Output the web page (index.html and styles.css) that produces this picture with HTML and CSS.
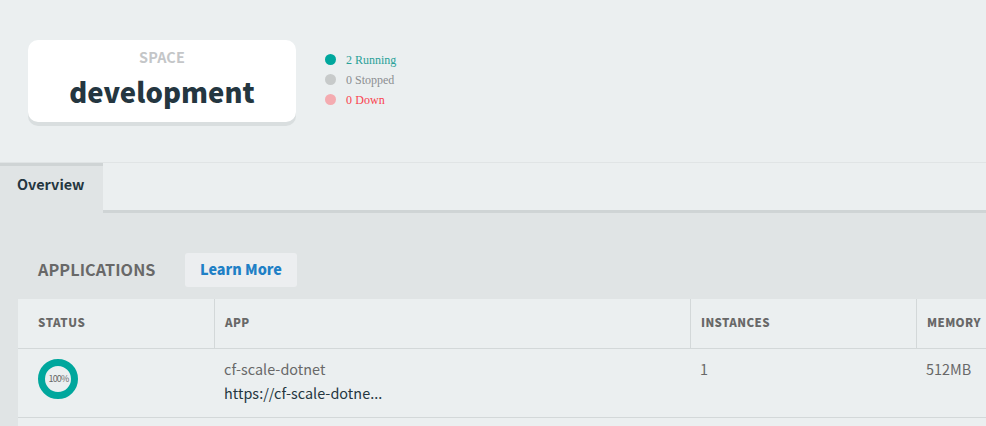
FILE: index.html
```html
<!DOCTYPE html>
<html lang="en">
<head>
<meta charset="utf-8">
<title>Space: development</title>
<link rel="stylesheet" href="styles.css">
</head>
<body>
<header class="space-header">
  <div class="space-card">
    <span class="space-label">SPACE</span>
    <h1 class="space-name">development</h1>
  </div>
  <ul class="health">
    <li class="running"><i class="dot"></i><span>2 Running</span></li>
    <li class="stopped"><i class="dot"></i><span>0 Stopped</span></li>
    <li class="down"><i class="dot"></i><span>0 Down</span></li>
  </ul>
</header>
<nav class="tabs">
  <a class="tab"><span class="tab-text">Overview</span></a>
  <div class="tabs-rest"></div>
</nav>
<main class="content">
  <div class="section-head">
    <h2 class="section-title"><span>APPLICATIONS</span></h2>
    <a class="learn"><span>Learn More</span></a>
  </div>
  <div class="table">
    <div class="row head">
      <div class="cell"><span class="h-status">STATUS</span></div>
      <div class="cell"><span class="h-app">APP</span></div>
      <div class="cell"><span class="h-inst">INSTANCES</span></div>
      <div class="cell"><span class="h-mem">MEMORY</span></div>
    </div>
    <div class="row app">
      <div class="cell"><div class="ring"><span>100%</span></div></div>
      <div class="cell"><div><span class="app-name">cf-scale-dotnet</span></div><div><span class="app-url">https://cf-scale-dotne...</span></div></div>
      <div class="cell"><span>1</span></div>
      <div class="cell"><span class="mem">512MB</span></div>
    </div>
  </div>
</main>
</body>
</html>
```
FILE: styles.css
```css
* { box-sizing: border-box; }
html, body { height: 100%; }
body {
  margin: 0;
  display: flex;
  flex-direction: column;
  overflow: hidden;
  background: #ebeff0;
  color: #686868;
  font-family: "Noto Sans CJK SC", "Open Sans", sans-serif;
}
h1, h2, ul { margin: 0; padding: 0; }
.space-header {
  flex: none;
  display: flex;
  height: 163px;
  padding: 40px 28px;
  border-bottom: 1px solid #e0e4e5;
}
.space-card {
  width: 268px;
  height: 82px;
  padding-top: 7px;
  border-radius: 10px;
  background: #fff;
  box-shadow: 0 4px 0 #d9dedf;
  text-align: center;
}
.space-label {
  display: block;
  color: #c4c6c8;
  font-size: 14.4px;
  font-weight: 700;
  line-height: 20px;
  letter-spacing: .15px;
}
.space-name {
  color: #243640;
  font-size: 27.4px;
  font-weight: 900;
  line-height: 44px;
  margin-top: 2px;
  letter-spacing: .08px;
}
.health {
  margin: 10px 0 0 30px;
  list-style: none;
  font: 12px/20px "Liberation Serif", serif;
}
.health li { display: flex; align-items: center; height: 20px; }
.dot { width: 11px; height: 11px; margin: -1px 10px 0 -1px; border-radius: 50%; }
.running { color: #2aa198; }
.running .dot { background: #00a79d; }
.stopped { color: #8b8e90; }
.stopped .dot { background: #c7caca; }
.down { color: #f9434f; letter-spacing: .1px; }
.down .dot { background: #f4abb0; }
.tabs { flex: none; display: flex; height: 50px; }
.tab {
  width: 103px;
  padding: 8px 0 0 17px;
  border-top: 3px solid #cfd4d5;
  background: #e0e4e5;
  color: #243640;
  font-size: 14.4px;
  font-weight: 700;
  line-height: 20px;
}
.tabs-rest { flex: 1; border-bottom: 3px solid #cfd4d5; }
.content { flex: 1; padding: 40px 0 0 18px; background: #e0e4e5; }
.section-head { display: flex; height: 34px; padding-left: 20px; }
.section-title { width: 147px; font-size: 16.2px; font-weight: 700; line-height: 32px; letter-spacing: .08px; }
.learn {
  width: 112px;
  height: 34px;
  border-radius: 3px;
  background: #eceef0;
  color: #1f80c6;
  font-size: 14.4px;
  font-weight: 900;
  line-height: 32px;
  text-align: center;
}
.table { margin-top: 12px; background: #ebeff0; height: 140px; }
.row {
  display: grid;
  grid-template-columns: 196px 476px 226px 70px;
  border-bottom: 1px solid #d3d8d9;
}
.head { height: 50px; font-size: 11.5px; font-weight: 900; line-height: 46px; letter-spacing: .4px; }
.head .cell { padding-left: 10px; border-left: 1px solid #d3d8d9; }
.head .cell:first-child { padding-left: 20px; border-left: 0; }
.h-status { letter-spacing: .6px; }
.app { height: 69px; padding-top: 8px; font-size: 14.4px; line-height: 24px; font-weight: 400; }
.app .cell { padding-left: 10px; }
.app .cell:first-child { padding-left: 20px; }
.app-name, .app-url { letter-spacing: .04px; }
.app-url { color: #243640; }
.ring {
  display: flex;
  align-items: center;
  justify-content: center;
  width: 40px;
  height: 40px;
  margin-top: 2px;
  padding-left: 1px;
  border: 7px solid #00a79d;
  border-radius: 50%;
  font-size: 9px;
  line-height: 12px;
  letter-spacing: -.8px;
}
```
